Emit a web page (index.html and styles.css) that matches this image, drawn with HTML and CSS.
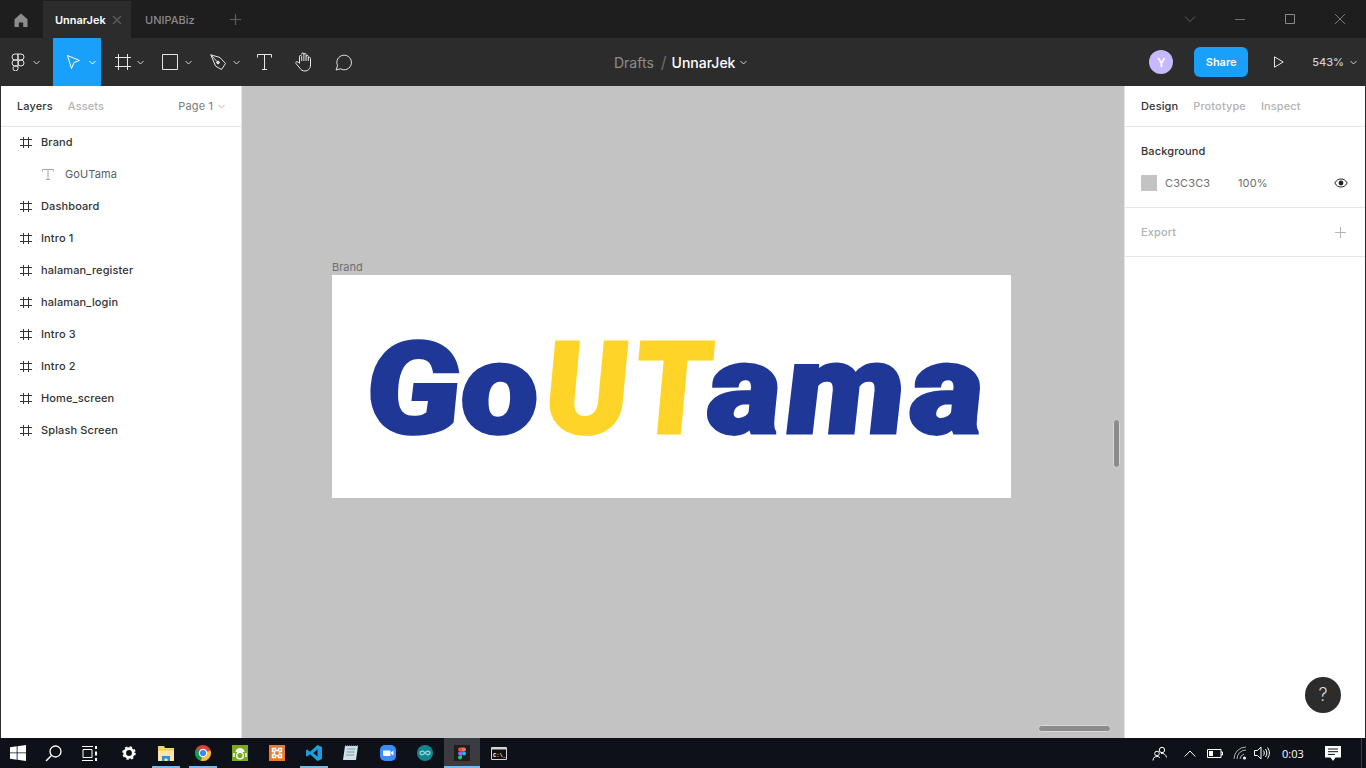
FILE: index.html
```html
<!DOCTYPE html>
<html lang="en">
  <head>
    <link rel="stylesheet" href="styles.css">
    <meta charset="UTF-8" />
    <title>UnnarJek</title>
  </head>
  <body>
    <div class="app">
      <!-- Window title bar -->
      <header class="titlebar">
        <div class="home-tab">
          <svg width="16" height="16" viewBox="0 0 16 16"><path d="M8 1.500 1.500 7.200V15h4.300v-4.500h4.400V15h4.300V7.200z" fill="#8c8c8c"/></svg>
        </div>
        <div class="tab tab-active">
          <span>UnnarJek</span>
          <svg width="10" height="10" viewBox="0 0 10 10"><path d="M1 1l8 8M9 1 1 9" stroke="#5e5e5e" stroke-width="1.200"/></svg>
        </div>
        <div class="tab">UNIPABiz</div>
        <svg class="tab-plus" width="11" height="11" viewBox="0 0 11 11"><path d="M5.500 0v11M0 5.500h11" stroke="#5e5e5e" stroke-width="1.200"/></svg>
        <div class="window-controls">
          <svg width="12" height="12" viewBox="0 0 12 12"><path d="M1 3.500 6 8.500l5-5" fill="none" stroke="#5f5f5f"/></svg>
          <svg width="12" height="12" viewBox="0 0 12 12"><path d="M1 6.500h10" stroke="#6e6e6e"/></svg>
          <svg width="12" height="12" viewBox="0 0 12 12"><path d="M1.500 1.500h9v9h-9z" fill="none" stroke="#8a8a8a"/></svg>
          <svg width="12" height="12" viewBox="0 0 12 12"><path d="M1 1l10 10M11 1 1 11" stroke="#7a7a7a"/></svg>
        </div>
      </header>

      <!-- Editor toolbar -->
      <nav class="toolbar">
        <div class="tools">
          <div class="tool tool-menu">
            <svg width="14" height="18" viewBox="0 0 14 18" fill="none" stroke="#e6e6e6"><path d="M7 1H4a3 3 0 0 0 0 6h3zM7 1h3a3 3 0 0 1 0 6H7zM7 7H4a3 3 0 0 0 0 6h3zM7 13H4a2.500 2.500 0 1 0 3 2.500z"/><circle cx="10" cy="10" r="3"/></svg>
            <svg class="chev" width="7" height="5" viewBox="0 0 7 5"><path d="M.5 1 3.500 4l3-3" fill="none" stroke="#d0d0d0"/></svg>
          </div>
          <div class="tool tool-move">
            <svg width="15" height="16" viewBox="0 0 15 16"><path d="M1.500 1.500 13.500 6.500 8 8.500 5.500 14.500z" fill="none" stroke="#fff"/></svg>
            <svg class="chev" width="7" height="5" viewBox="0 0 7 5"><path d="M.5 1 3.500 4l3-3" fill="none" stroke="#fff"/></svg>
          </div>
          <div class="tool tool-frame">
            <svg width="16" height="16" viewBox="0 0 16 16"><path d="M3.500 0v16M12.500 0v16M0 3.500h16M0 12.500h16" stroke="#e6e6e6"/></svg>
            <svg class="chev" width="7" height="5" viewBox="0 0 7 5"><path d="M.5 1 3.500 4l3-3" fill="none" stroke="#d0d0d0"/></svg>
          </div>
          <div class="tool tool-rect">
            <svg width="16" height="16" viewBox="0 0 16 16"><path d="M.5.500h15v15H.5z" fill="none" stroke="#e6e6e6"/></svg>
            <svg class="chev" width="7" height="5" viewBox="0 0 7 5"><path d="M.5 1 3.500 4l3-3" fill="none" stroke="#d0d0d0"/></svg>
          </div>
          <div class="tool tool-pen">
            <svg width="17" height="17" viewBox="0 0 17 17" fill="none" stroke="#e6e6e6"><path d="M.8.800 10 3.500 15.500 9.500 11.500 15.500 5.500 12 .8.800zM.8.800 7 7.500"/><circle cx="8" cy="8.500" r="1.300" fill="#e6e6e6"/></svg>
            <svg class="chev" width="7" height="5" viewBox="0 0 7 5"><path d="M.5 1 3.500 4l3-3" fill="none" stroke="#d0d0d0"/></svg>
          </div>
          <div class="tool tool-text">
            <svg width="15" height="16" viewBox="0 0 15 16"><path d="M.5 3.500V.5h14v3M7.500 .5v15M5 15.500h5" fill="none" stroke="#e6e6e6"/></svg>
          </div>
          <div class="tool tool-hand">
            <svg width="19" height="20" viewBox="0 0 19 20"><path d="M4.500 11V4.500a1.100 1.100 0 0 1 2.200 0V9m0-6.500V2a1.100 1.100 0 0 1 2.200 0v7m0-6.500a1.100 1.100 0 0 1 2.200 0V9m0-4.500a1.100 1.100 0 0 1 2.200 0V9m0-2.500a1.100 1.100 0 0 1 2.200 0v6.500c0 3.500-2.500 6-5.500 6-2.500 0-4-1-5.300-3L1 11.500c-.8-1.500 1-2.500 2-1.500l1.500 1.500" fill="none" stroke="#e6e6e6"/></svg>
          </div>
          <div class="tool tool-comment">
            <svg width="18" height="18" viewBox="0 0 18 18"><path d="M1 17l1.600-4.300A7.300 7.300 0 1 1 5.500 15.800z" fill="none" stroke="#e6e6e6"/></svg>
          </div>
        </div>
        <div class="breadcrumb">
          <span class="crumb-muted">Drafts</span>
          <span class="crumb-slash">/</span>
          <span class="crumb-file">UnnarJek</span>
          <svg width="7" height="5" viewBox="0 0 7 5"><path d="M.5 1 3.500 4l3-3" fill="none" stroke="#d0d0d0"/></svg>
        </div>
        <div class="toolbar-right">
          <div class="avatar">Y</div>
          <button class="share">Share</button>
          <svg class="play" width="10" height="12" viewBox="0 0 10 12"><path d="M.5.800 9.200 6 .5 11.200z" fill="none" stroke="#e6e6e6"/></svg>
          <span class="zoom-level">543%</span>
          <svg width="7" height="5" viewBox="0 0 7 5"><path d="M.5 1 3.500 4l3-3" fill="none" stroke="#d0d0d0"/></svg>
        </div>
      </nav>

      <main class="workspace">
        <!-- Layers panel -->
        <aside class="left-panel">
          <div class="panel-tabs">
            <span class="panel-tab-on">Layers</span>
            <span class="panel-tab-off">Assets</span>
            <span class="page-select">Page 1
              <svg width="7" height="5" viewBox="0 0 7 5"><path d="M.5 1 3.500 4l3-3" fill="none" stroke="#b3b3b3"/></svg>
            </span>
          </div>
          <ul class="layers">
            <li class="layer"><svg class="layer-icon" width="12" height="11" viewBox="0 0 12 11"><path d="M3.500 0v11M8.500 0v11M0 2.500h12M0 8.500h12" stroke="#333"/></svg>Brand</li>
            <li class="layer layer-child"><svg class="layer-icon" width="12" height="11" viewBox="0 0 12 11"><path d="M.5 2.500V.5h11v2M6 .5v10M4 10.500h4" fill="none" stroke="#a8a8a8"/></svg>GoUTama</li>
            <li class="layer"><svg class="layer-icon" width="12" height="11" viewBox="0 0 12 11"><path d="M3.500 0v11M8.500 0v11M0 2.500h12M0 8.500h12" stroke="#333"/></svg>Dashboard</li>
            <li class="layer"><svg class="layer-icon" width="12" height="11" viewBox="0 0 12 11"><path d="M3.500 0v11M8.500 0v11M0 2.500h12M0 8.500h12" stroke="#333"/></svg>Intro 1</li>
            <li class="layer"><svg class="layer-icon" width="12" height="11" viewBox="0 0 12 11"><path d="M3.500 0v11M8.500 0v11M0 2.500h12M0 8.500h12" stroke="#333"/></svg>halaman_register</li>
            <li class="layer"><svg class="layer-icon" width="12" height="11" viewBox="0 0 12 11"><path d="M3.500 0v11M8.500 0v11M0 2.500h12M0 8.500h12" stroke="#333"/></svg>halaman_login</li>
            <li class="layer"><svg class="layer-icon" width="12" height="11" viewBox="0 0 12 11"><path d="M3.500 0v11M8.500 0v11M0 2.500h12M0 8.500h12" stroke="#333"/></svg>Intro 3</li>
            <li class="layer"><svg class="layer-icon" width="12" height="11" viewBox="0 0 12 11"><path d="M3.500 0v11M8.500 0v11M0 2.500h12M0 8.500h12" stroke="#333"/></svg>Intro 2</li>
            <li class="layer"><svg class="layer-icon" width="12" height="11" viewBox="0 0 12 11"><path d="M3.500 0v11M8.500 0v11M0 2.500h12M0 8.500h12" stroke="#333"/></svg>Home_screen</li>
            <li class="layer"><svg class="layer-icon" width="12" height="11" viewBox="0 0 12 11"><path d="M3.500 0v11M8.500 0v11M0 2.500h12M0 8.500h12" stroke="#333"/></svg>Splash Screen</li>
          </ul>
        </aside>

        <!-- Canvas -->
        <section class="canvas">
          <div class="frame-label">Brand</div>
          <div class="frame">
            <div class="brand"><span class="brand-blue">Go</span><span class="brand-yellow brand-u">U</span><span class="brand-yellow brand-t">T</span><span class="brand-blue brand-tail">ama</span></div>
          </div>
          <div class="scroll-v"></div>
          <div class="scroll-h"></div>
        </section>

        <!-- Design panel -->
        <aside class="right-panel">
          <div class="panel-tabs">
            <span class="panel-tab-on">Design</span>
            <span class="panel-tab-off">Prototype</span>
            <span class="panel-tab-off">Inspect</span>
          </div>
          <div class="section section-bg">
            <div class="section-title">Background</div>
            <div class="bg-row">
              <span class="swatch"></span>
              <span class="bg-hex">C3C3C3</span>
              <span class="bg-pct">100%</span>
              <svg class="eye" width="14" height="10" viewBox="0 0 14 10"><path d="M.8 5C2.500 2 4.500 1 7 1s4.500 1 6.200 4C11.500 8 9.500 9 7 9S2.500 8 .8 5z" fill="none" stroke="#222"/><circle cx="7" cy="5" r="2.400" fill="#222"/></svg>
            </div>
          </div>
          <div class="section section-export">
            <span>Export</span>
            <svg width="11" height="11" viewBox="0 0 11 11"><path d="M5.500 0v11M0 5.500h11" stroke="#b3b3b3"/></svg>
          </div>
          <div class="help">?</div>
        </aside>
      </main>

      <!-- Windows taskbar -->
      <footer class="taskbar">
        <div class="task-start">
          <svg width="16" height="16" viewBox="0 0 16 16"><path d="M0 2.300 6.700 1.300V7.500H0zM7.500 1.200 16 0V7.500H7.500zM0 8.300H6.700V14.700L0 13.700zM7.500 8.300H16V16L7.500 14.800z" fill="#fff"/></svg>
        </div>
        <div class="task-search">
          <svg width="17" height="17" viewBox="0 0 17 17"><circle cx="10.500" cy="6.500" r="5.500" fill="none" stroke="#fff" stroke-width="1.300"/><path d="M6.500 10.500 1 16" stroke="#fff" stroke-width="1.500"/></svg>
        </div>
        <div class="task-view">
          <svg width="16" height="15" viewBox="0 0 16 15" fill="none" stroke="#fff"><path d="M0 .5h11M0 14.500h11M1 3.500h9v8H1z"/><path d="M14 0v3M14 5.500v4M14 12v3" stroke-width="2"/></svg>
        </div>
        <div class="task-app">
          <svg width="14" height="14" viewBox="0 0 14 14"><circle cx="7" cy="7" r="4.300" fill="none" stroke="#fff" stroke-width="2.800" /><circle cx="7" cy="7" r="6" fill="none" stroke="#fff" stroke-width="1.600" stroke-dasharray="2.400 2.300"/></svg>
        </div>
        <div class="task-app is-open">
          <svg width="16" height="15" viewBox="0 0 16 15"><path d="M0 0h6l1 2h9v13H0z" fill="#f3d274"/><path d="M0 5h16v10H0z" fill="#fbe7a3"/><path d="M4 15v-5h8v5h-2.500v-2.500h-3V15z" fill="#2a8fd8"/></svg>
        </div>
        <div class="task-app is-open">
          <svg width="16" height="16" viewBox="0 0 16 16"><circle cx="8" cy="8" r="8" fill="#db4437"/><path d="M8 8 1.100 4A8 8 0 0 0 6 15.700L8 12z" fill="#0f9d58"/><path d="M8 8l7.500-2.500A8 8 0 0 1 6 15.700z" fill="#fbc02d"/><circle cx="8" cy="8" r="3.700" fill="#4285f4" stroke="#fff" stroke-width="1.200"/></svg>
        </div>
        <div class="task-app">
          <svg width="16" height="16" viewBox="0 0 16 16"><path d="M0 0h16v16H0z" fill="#7aa81f"/><path d="M3.500 7a4.500 4 0 0 1 9 0z" fill="#fff"/><circle cx="8" cy="10.500" r="3.300" fill="none" stroke="#fff" stroke-width="1.400"/><path d="M2 8v4M14 8v4" stroke="#fff" stroke-width="1.400"/></svg>
        </div>
        <div class="task-app">
          <svg width="16" height="16" viewBox="0 0 16 16"><path d="M0 0h16v16H0z" fill="#ec7a2c"/><path d="M3.500 3.500h3v2h3v-2h3v3h-2v3h2v3h-3v-2h-3v2h-3v-3h2v-3h-2z" fill="none" stroke="#fff" stroke-width="1.500"/></svg>
        </div>
        <div class="task-app is-open">
          <svg width="16" height="16" viewBox="0 0 16 16"><path d="M11.500 0 16 2v12l-4.500 2L4 9.300 1.300 11.500 0 10.800V5.200l1.300-.7L4 6.700zM11.500 4.500 7.200 8l4.300 3.500z" fill="#1b9de2"/></svg>
        </div>
        <div class="task-app">
          <svg width="15" height="16" viewBox="0 0 15 16"><path d="M2 1h13l-2 14H0z" fill="#cfe3ea"/><path d="M4 4h8M3.500 7h8M3 10h8" stroke="#7d9aa5"/><path d="M2 .5h13" stroke="#5a7a88" stroke-width="1.400" stroke-dasharray="1 1"/></svg>
        </div>
        <div class="task-app">
          <svg width="16" height="16" viewBox="0 0 16 16"><rect width="16" height="16" rx="5" fill="#3a8dff"/><path d="M3 5.500h6.500a1 1 0 0 1 1 1V11H4a1 1 0 0 1-1-1zM11 7.500 13.500 5.500v5L11 8.500z" fill="#fff"/></svg>
        </div>
        <div class="task-app">
          <svg width="16" height="16" viewBox="0 0 16 16"><circle cx="8" cy="8" r="8" fill="#11868e"/><path d="M8 8C6.500 5.500 3 5.800 3 8s3.500 2.500 5 0c1.500-2.500 5-2.200 5 0s-3.500 2.500-5 0z" fill="none" stroke="#8fd3d6" stroke-width="1.300"/></svg>
        </div>
        <div class="task-app is-open is-active">
          <div class="figma-tile">
            <svg width="8" height="13" viewBox="0 0 8 12"><path d="M4 0H2a2 2 0 0 0 0 4h2z" fill="#f24e1e"/><path d="M4 0h2a2 2 0 0 1 0 4H4z" fill="#ff7262"/><path d="M4 4H2a2 2 0 0 0 0 4h2z" fill="#a259ff"/><circle cx="6" cy="6" r="2" fill="#1abcfe"/><path d="M4 8H2a2 2 0 1 0 2 2z" fill="#0acf83"/></svg>
          </div>
        </div>
        <div class="task-app">
          <svg width="16" height="13" viewBox="0 0 16 13"><path d="M.5.500h15v12H.5z" fill="#111" stroke="#d5d5d5"/><path d="M1 1.500h14" stroke="#d5d5d5" stroke-width="2"/><text class="cmd-prompt" x="2" y="10">C:\_</text></svg>
        </div>
        <div class="tray">
          <svg class="tray-people" width="15" height="15" viewBox="0 0 15 15" fill="none" stroke="#fff"><circle cx="10" cy="4" r="2.700"/><circle cx="5" cy="7.500" r="2.300"/><path d="M1 14.500c0-2.500 1.500-4 4-4 1.500 0 2.500.5 3 1.500M9 7.500c2.500-.5 5 1 5.500 4"/></svg>
          <svg class="tray-chevron" width="12" height="7" viewBox="0 0 12 7"><path d="M.7 6.500 6 1l5.300 5.500" fill="none" stroke="#fff"/></svg>
          <svg class="tray-battery" width="16" height="9" viewBox="0 0 16 9"><path d="M.5.500h13.500v8H.5zM14 3h1.500v3H14" fill="none" stroke="#fff"/><path d="M2 2h4v5H2z" fill="#fff"/></svg>
          <svg class="tray-wifi" width="15" height="14" viewBox="0 0 15 14" fill="none" stroke="#fff"><path d="M1 13A12 12 0 0 1 13 1M4 13a9 9 0 0 1 9-9M7 13a6 6 0 0 1 4-5" stroke-opacity=".65"/><circle cx="11.500" cy="12" r="1.500" fill="#fff" stroke="none"/></svg>
          <svg class="tray-volume" width="16" height="14" viewBox="0 0 16 14" fill="none" stroke="#fff"><path d="M.5 4.500h3L7 1v12L3.500 9.500h-3zM9.500 4.500c1 1.500 1 3.500 0 5M11.500 3c1.800 2.500 1.800 5.500 0 8M13.500 1.500c2.500 3.500 2.500 7.500 0 11"/></svg>
          <span class="clock">0:03</span>
          <svg class="tray-notif" width="16" height="15" viewBox="0 0 16 15"><path d="M0 0h16v11.500h-5.500L8 15l-2.500-3.500H0z" fill="#fff"/><path d="M3 3h10M3 5.700h10M3 8.400h7" stroke="#111"/></svg>
          <span class="show-desktop"></span>
        </div>
      </footer>
    </div>
  </body>
</html>
```
FILE: styles.css
```css
* {
  margin: 0;
  padding: 0;
  box-sizing: border-box;
  font-family: "Inter", "Roboto", sans-serif;
}

body {
  width: 1366px;
  height: 768px;
  overflow: hidden;
  background: #c3c3c3;
}

.app {
  display: flex;
  flex-direction: column;
  height: 768px;
}

/* Title bar */
.titlebar {
  display: flex;
  align-items: center;
  flex: 0 0 38px;
  background: #1e1e1e;
  font-size: 11px;
  font-weight: 500;
}
.titlebar svg {
  display: block;
}
.home-tab {
  display: flex;
  justify-content: center;
  width: 43px;
  padding: 1px 2px 0 0;
}
.tab {
  display: flex;
  align-items: center;
  align-self: flex-end;
  height: 37px;
  width: 88px;
  padding-left: 14px;
  color: #8a8a8a;
}
.tab-active {
  justify-content: space-between;
  padding-left: 12px;
  padding-right: 9px;
  background: #2c2c2c;
  color: #fff;
  font-weight: 600;
}
.tab-plus {
  margin-left: 11px;
}
.window-controls {
  display: flex;
  align-items: center;
  gap: 38px;
  margin-left: auto;
  margin-right: 20px;
}

/* Toolbar */
.toolbar {
  position: relative;
  display: flex;
  align-items: center;
  justify-content: space-between;
  flex: 0 0 48px;
  background: #2c2c2c;
  color: #e6e6e6;
}
.tools {
  display: flex;
  align-items: center;
  height: 48px;
}
.tool {
  display: flex;
  flex: none;
  align-items: center;
  height: 48px;
  gap: 5px;
}
.tool svg {
  display: block;
  flex: none;
}
.tool-menu {
  width: 53px;
  padding-left: 11px;
  gap: 8px;
}
.tool-move {
  width: 48px;
  padding-left: 13px;
  gap: 8px;
  background: #18a0fb;
}
.tool-frame {
  width: 48px;
  padding-left: 14px;
  gap: 6px;
}
.tool-rect {
  width: 47px;
  padding-left: 13px;
  gap: 7px;
}
.tool-pen {
  width: 46px;
  padding-left: 14px;
  gap: 6px;
}
.tool-text {
  width: 42px;
  padding-left: 15px;
}
.tool-hand {
  width: 44px;
  padding-left: 11px;
}
.tool-comment {
  padding-left: 7px;
}
.breadcrumb {
  display: flex;
  align-items: center;
  position: absolute;
  left: 614px;
  top: 0;
  height: 48px;
  gap: 6px;
  font-size: 14px;
}
.crumb-muted {
  color: #8c8c8c;
}
.crumb-slash {
  color: #6e6e6e;
  font-size: 16px;
  margin: 0 1px;
}
.crumb-file {
  color: #fff;
  font-weight: 500;
  margin: 0 -1px 0 -2px;
}
.toolbar-right {
  display: flex;
  align-items: center;
  padding-right: 9px;
}
.avatar {
  display: flex;
  align-items: center;
  justify-content: center;
  width: 24px;
  height: 24px;
  border-radius: 50%;
  background: #c7b9ff;
  color: #fff;
  font-size: 12px;
  font-weight: 600;
}
.share {
  width: 54px;
  height: 30px;
  margin-left: 21px;
  border: none;
  border-radius: 6px;
  background: #18a0fb;
  color: #fff;
  font-size: 11px;
  font-weight: 600;
}
.play {
  margin-left: 26px;
}
.zoom-level {
  margin-left: 28px;
  margin-right: 6px;
  color: #d0d0d0;
  font-size: 11px;
  font-weight: 500;
}

/* Panels */
.workspace {
  display: flex;
  flex: 1;
  min-height: 0;
}
.left-panel,
.right-panel {
  position: relative;
  flex: none;
  background: #fff;
  font-size: 11px;
  letter-spacing: 0.12px;
  color: #333;
}
.left-panel {
  width: 242px;
  border-left: 1px solid #2c2c2c;
  border-right: 1px solid #e5e5e5;
}
.right-panel {
  width: 242px;
  border-left: 1px solid #e5e5e5;
  border-right: 1px solid #2c2c2c;
}
.panel-tabs {
  display: flex;
  align-items: center;
  gap: 15px;
  height: 41px;
  padding: 0 16px;
  border-bottom: 1px solid #e5e5e5;
  font-weight: 500;
}
.panel-tab-on {
  color: #333;
}
.panel-tab-off {
  color: #b3b3b3;
}
.page-select {
  display: flex;
  align-items: center;
  gap: 5px;
  margin-left: auto;
  color: #7a7a7a;
  font-weight: 400;
}
.layers {
  list-style: none;
  margin-top: -1px;
}
.layer {
  display: flex;
  align-items: center;
  gap: 9px;
  height: 32px;
  padding-left: 19px;
  color: #333;
  font-weight: 500;
}
.layer-child {
  padding-left: 41px;
  gap: 11px;
  color: #5c5c5c;
  font-weight: 400;
}
.section {
  padding: 0 16px;
  border-bottom: 1px solid #e5e5e5;
}
.section-bg {
  height: 81px;
}
.section-title {
  padding-top: 17px;
  font-weight: 500;
}
.bg-row {
  display: flex;
  align-items: center;
  margin-top: 17px;
  height: 16px;
  color: #6e6e6e;
}
.swatch {
  width: 16px;
  height: 16px;
  background: #c3c3c3;
}
.bg-hex {
  margin-left: 8px;
  width: 73px;
}
.eye {
  margin-left: auto;
  margin-right: 1px;
}
.section-export {
  display: flex;
  align-items: center;
  justify-content: space-between;
  height: 49px;
  padding-right: 19px;
  color: #b3b3b3;
  font-weight: 500;
}
.help {
  position: absolute;
  left: 180px;
  top: 591px;
  width: 36px;
  height: 36px;
  border-radius: 50%;
  background: #2c2c2c;
  color: #d9d9d9;
  font-size: 18px;
  font-weight: 300;
  line-height: 36px;
  text-align: center;
}

/* Canvas */
.canvas {
  position: relative;
  flex: 1;
  background: #c3c3c3;
}
.frame-label {
  position: absolute;
  left: 90px;
  top: 174px;
  font-size: 11px;
  color: #6e6e6e;
}
.frame {
  position: absolute;
  left: 90px;
  top: 189px;
  width: 679px;
  height: 223px;
  background: #fff;
  overflow: hidden;
}
.brand {
  padding: 39px 0 0 33px;
  font-family: "Roboto", sans-serif;
  font-size: 128px;
  font-style: italic;
  font-weight: 900;
  line-height: 150px;
  white-space: nowrap;
  -webkit-text-stroke: 3px currentColor;
  transform: scaleX(1.12) skewX(4deg);
  transform-origin: 0 161px;
}
.brand span {
  font-family: inherit;
}
.brand-blue {
  color: #1f3796;
}
.brand-yellow {
  color: #ffd428;
}
.brand-u,
.brand-t {
  display: inline-block;
  transform-origin: 0 0;
}
.brand-u {
  margin: 0 -8px 0 6px;
  transform: scaleX(0.9);
}
.brand-t {
  margin: 0 -10px 0 5px;
  transform: scaleX(0.87);
}
.brand-tail {
  margin-left: -3px;
  letter-spacing: 4px;
}
.scroll-v {
  position: absolute;
  right: 4px;
  top: 333px;
  width: 7px;
  height: 49px;
  border-radius: 4px;
  background: #8c8c8c;
  border: 1px solid #d9d9d9;
}
.scroll-h {
  position: absolute;
  right: 13px;
  bottom: 6px;
  width: 73px;
  height: 7px;
  border-radius: 4px;
  background: #8c8c8c;
  border: 1px solid #d9d9d9;
}

/* Taskbar */
.taskbar {
  display: flex;
  align-items: stretch;
  flex: 0 0 30px;
  background: #0f1118;
}
.taskbar svg {
  display: block;
}
.task-start,
.task-search,
.task-view,
.task-app {
  display: flex;
  align-items: center;
  justify-content: center;
}
.task-start {
  width: 35px;
}
.task-search {
  width: 37px;
}
.task-view {
  width: 36px;
}
.task-app {
  width: 37px;
}
.task-view + .task-app {
  margin-left: 2px;
}
.is-open {
  background: linear-gradient(#76b9ed, #76b9ed) center bottom / 28px 2px no-repeat;
}
.is-active {
  width: 36px;
  margin-left: 1px;
  background: linear-gradient(#76b9ed, #76b9ed) center bottom / 100% 2px no-repeat, #3a3c42;
}
.figma-tile {
  display: flex;
  align-items: center;
  justify-content: center;
  width: 16px;
  height: 16px;
  background: #1e1e1e;
}
.cmd-prompt {
  fill: #fff;
  font-family: "Liberation Mono", monospace;
  font-size: 5.5px;
  font-weight: 700;
}
.tray {
  display: flex;
  align-items: center;
  margin-left: auto;
  color: #fff;
  font-size: 11px;
}
.tray-people {
  margin-right: 17px;
}
.tray-chevron {
  margin-right: 11px;
}
.tray-battery {
  margin-right: 10px;
}
.tray-wifi {
  margin-right: 6px;
}
.tray-volume {
  margin-right: 12px;
}
.clock {
  width: 21px;
  font-family: "Open Sans", sans-serif;
  margin-right: 22px;
}
.tray-notif {
  margin-right: 20px;
}
.show-desktop {
  width: 1px;
  height: 30px;
  margin-right: 4px;
  background: #3a3c42;
}
```
